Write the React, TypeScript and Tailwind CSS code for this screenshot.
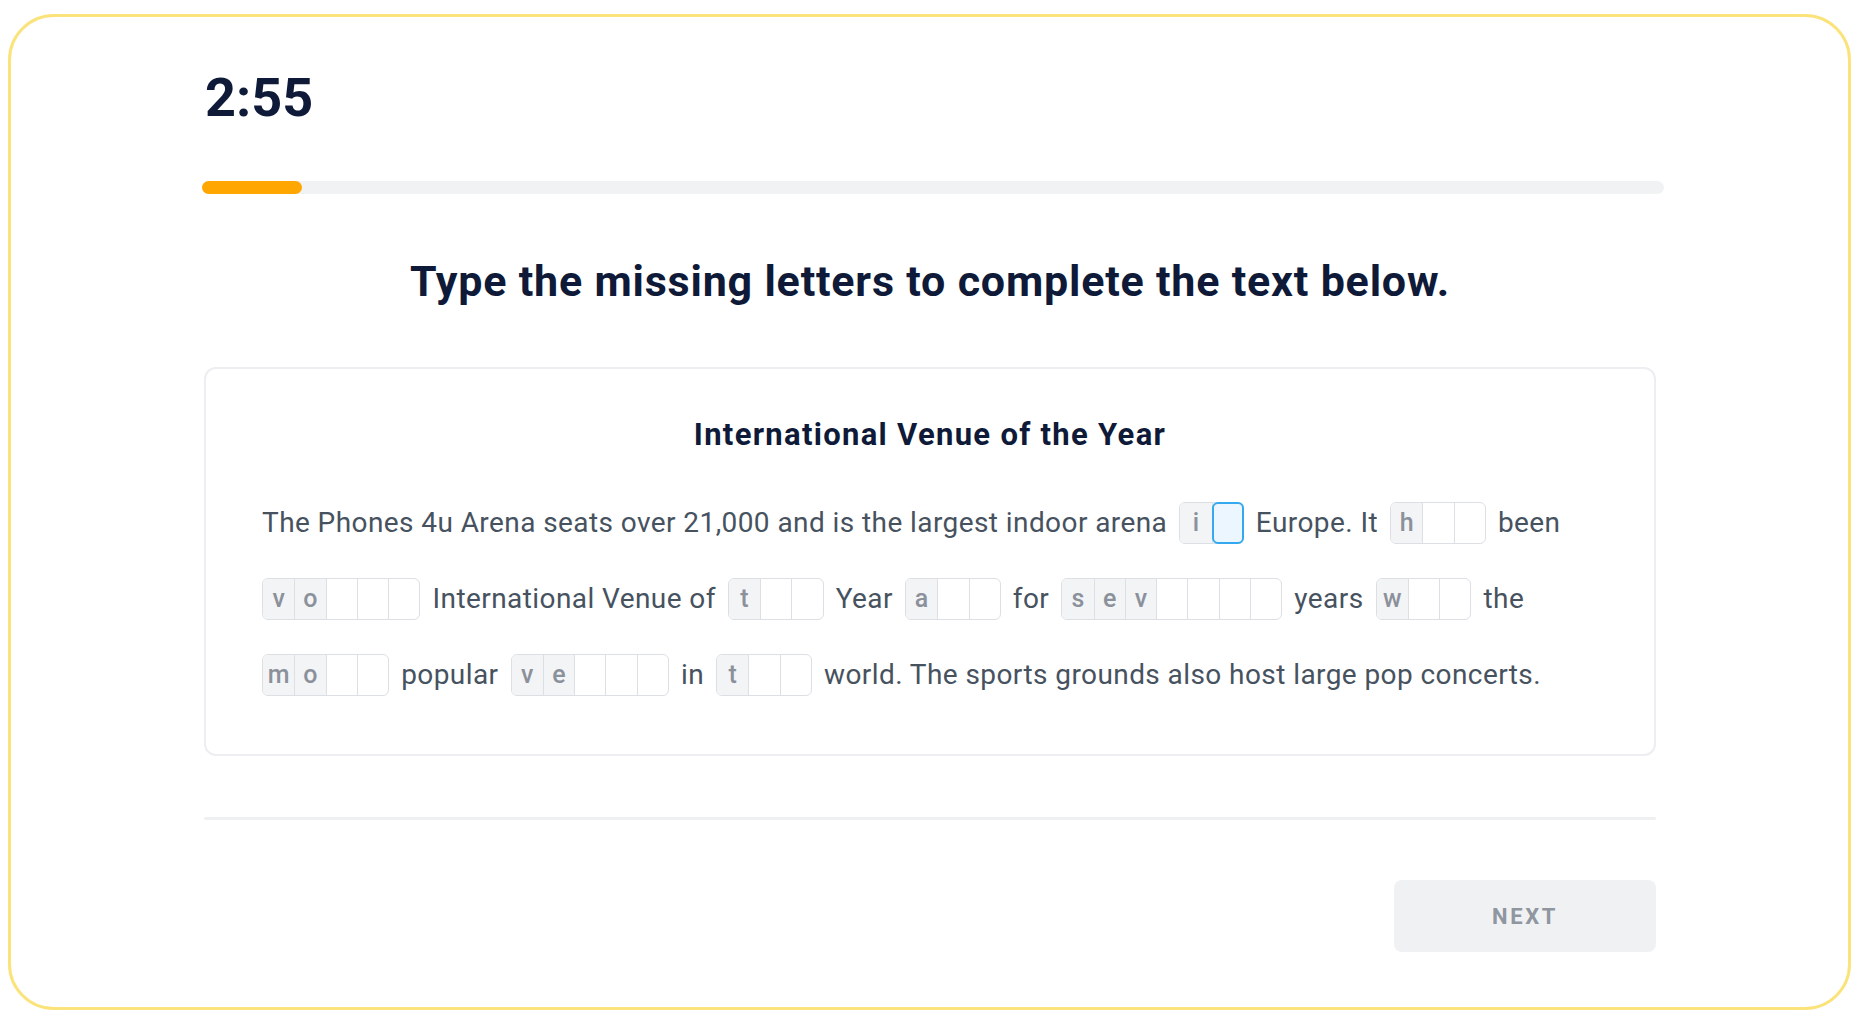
import React from "react";

const FONT = { fontFamily: "Roboto, 'Liberation Sans', sans-serif" };

function Boxes({ pre, total, active }: { pre: string; total: number; active?: number }) {
  const cells = Array.from({ length: total }, (_, i) => i);
  return (
    <div className="inline-flex h-[42px] shrink-0 rounded-[6px] border border-[#dcdfe3] bg-white">
      {cells.map((i) => {
        const ch = pre[i];
        const isActive = active === i;
        return (
          <div
            key={i}
            className={
              "relative flex w-[31.3px] items-center justify-center text-[25px] font-medium text-[#8b919b] " +
              (i > 0 ? "border-l border-[#dcdfe3] " : "") +
              (ch ? "bg-[#f3f4f6] " : "") +
              (i === 0 ? "rounded-l-[5px] " : "") +
              (i === total - 1 ? "rounded-r-[5px] " : "")
            }
          >
            {ch ?? ""}
            {isActive && (
              <div className="absolute inset-[-1px] rounded-[6px] border-2 border-[#34a9ef] bg-[#ecf6fe]" />
            )}
          </div>
        );
      })}
    </div>
  );
}

function T({ children }: { children: React.ReactNode }) {
  return (
    <span className="whitespace-nowrap text-[28px] tracking-[0.42px] text-[#47525f]">{children}</span>
  );
}

export default function App() {
  return (
    <div className="h-[1020px] w-[1864px] bg-white pb-[10px] pl-[8px] pr-[13px] pt-[14px]" style={FONT}>
      <div className="flex h-full w-full flex-col rounded-[46px] border-[3px] border-[#fbe37c] pl-[191px] pr-[190px] pt-[55px]">
        <div className="ml-[3px] text-[54px] font-bold leading-[52px] text-[#0e1a38]">2:55</div>
        <div className="mt-[57px] h-[13px] w-[calc(100%+6px)] rounded-full bg-[#f1f2f4]">
          <div className="h-full w-[100px] rounded-full bg-[#ffa600]" />
        </div>
        <h1 className="mt-[62px] text-center text-[43px] font-bold leading-[50px] tracking-[0.8px] text-[#0e1a38]">
          Type the missing letters to complete the text below.
        </h1>
        <div className="mx-[2px] mt-[61px] rounded-[12px] border-2 border-[#eceef1] px-[56px] pb-[58px] pt-[49px]">
          <h2 className="text-center text-[31px] font-bold leading-[34px] tracking-[1.3px] text-[#0e1a38]">
            International Venue of the Year
          </h2>
          <div className="mt-[50px] flex flex-col gap-[34px]">
            <div className="flex items-center gap-[12px]">
              <T>The Phones 4u Arena seats over 21,000 and is the largest indoor arena</T>
              <Boxes pre="i" total={2} active={1} />
              <T>Europe. It</T>
              <Boxes pre="h" total={3} />
              <T>been</T>
            </div>
            <div className="flex items-center gap-[12px]">
              <Boxes pre="vo" total={5} />
              <T>International Venue of</T>
              <Boxes pre="t" total={3} />
              <T>Year</T>
              <Boxes pre="a" total={3} />
              <T>for</T>
              <Boxes pre="sev" total={7} />
              <T>years</T>
              <Boxes pre="w" total={3} />
              <T>the</T>
            </div>
            <div className="flex items-center gap-[12px]">
              <Boxes pre="mo" total={4} />
              <T>popular</T>
              <Boxes pre="ve" total={5} />
              <T>in</T>
              <Boxes pre="t" total={3} />
              <T>world. The sports grounds also host large pop concerts.</T>
            </div>
          </div>
        </div>
        <div className="mx-[2px] mt-[61px] h-[3px] rounded-full bg-[#eef0f2]" />
        <div className="mt-[60px] flex justify-end">
          <button className="mr-[2px] flex h-[72px] w-[262px] items-center justify-center rounded-[8px] bg-[#f0f1f3] text-[22px] font-bold tracking-[0.12em] text-[#8f96a0]">
            NEXT
          </button>
        </div>
      </div>
    </div>
  );
}
